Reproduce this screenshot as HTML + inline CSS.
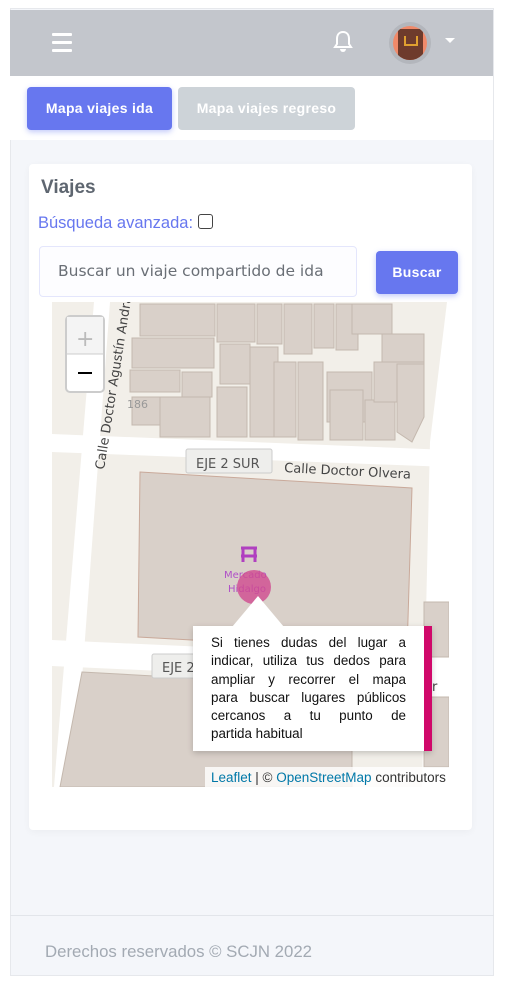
<!DOCTYPE html>
<html><head><meta charset="utf-8"><style>
*{box-sizing:border-box;margin:0;padding:0}
body{width:505px;height:985px;background:#fff;font-family:"Liberation Sans",sans-serif;position:relative;overflow:hidden}
.frame{position:absolute;left:10px;top:8px;width:484px;height:968px;background:#f4f6fa;border:1px solid #e6e8ec}
.nav{position:absolute;left:10px;top:10px;width:483px;height:66px;background:#c3c6cc}
.band{position:absolute;left:10px;top:76px;width:483px;height:64px;background:#fff}
.btn{position:absolute;border-radius:4px;color:#fff;font-weight:bold;font-size:14px;text-align:center;line-height:43px;letter-spacing:.3px}
.card{position:absolute;left:29px;top:164px;width:443px;height:666px;background:#fff;border-radius:4px;box-shadow:0 2px 8px rgba(0,0,0,.04)}
.tt div{text-align:justify;text-align-last:justify;white-space:nowrap;height:18.3px}
</style></head><body>
<div class="frame"></div>
<div class="nav">
 <div style="position:absolute;left:42px;top:23px;width:20px;height:3px;background:#fff;border-radius:1px"></div>
 <div style="position:absolute;left:42px;top:31px;width:20px;height:3px;background:#fff;border-radius:1px"></div>
 <div style="position:absolute;left:42px;top:39px;width:20px;height:3px;background:#fff;border-radius:1px"></div>
 <svg style="position:absolute;left:322px;top:20px" width="22" height="24" viewBox="0 0 22 24"><path d="M11 2c-4 0-6 3-6 7v5l-2 3h16l-2-3V9c0-4-2-7-6-7z" fill="none" stroke="#fff" stroke-width="2"/><path d="M8 19a3 3 0 0 0 6 0" fill="#fff"/></svg>
 <div style="position:absolute;left:379px;top:12px;width:42px;height:42px;border-radius:50%;background:#b3b6bc"></div>
 <div style="position:absolute;left:383px;top:16px;width:34px;height:34px;border-radius:50%;background:#f08a6a;overflow:hidden"><div style="position:absolute;left:5px;top:3px;width:25px;height:31px;background:#6e3b2c"></div><div style="position:absolute;left:11px;top:10px;width:14px;height:10px;border:2px solid #e0a030;border-top:none"></div></div>
 <div style="position:absolute;left:435px;top:28px;border-left:5px solid transparent;border-right:5px solid transparent;border-top:5px solid #fff"></div>
</div>
<div class="band"></div>
<div class="btn" style="left:27px;top:87px;width:145px;background:#6777ef;box-shadow:0 2px 6px rgba(103,119,239,.4)">Mapa viajes ida</div>
<div class="btn" style="left:178px;top:87px;width:177px;background:#cdd3d8">Mapa viajes regreso</div>
<div class="card">
 <div style="position:absolute;left:12px;top:13px;font-size:19px;font-weight:bold;color:#5e6670">Viajes</div>
 <div style="position:absolute;left:9px;top:50px;font-size:16.5px;color:#6777ef">Búsqueda avanzada:</div>
 <div style="position:absolute;left:169px;top:50px;width:15px;height:15px;border:1.5px solid #444;border-radius:3px"></div>
 <div style="position:absolute;left:10px;top:82px;width:318px;height:51px;border:1px solid #e4e6fc;border-radius:4px;background:#fdfdff;font-family:'DejaVu Sans',sans-serif;font-size:15.5px;color:#6a6f76;padding-left:18px;line-height:49px;white-space:nowrap">Buscar un viaje compartido de ida</div>
 <div class="btn" style="left:347px;top:87px;width:82px;background:#6777ef;box-shadow:0 2px 6px rgba(103,119,239,.4);font-size:14px">Buscar</div>
</div>
<svg style="position:absolute;left:52px;top:302px" width="397" height="485" viewBox="0 0 397 485">
 <rect width="397" height="485" fill="#f2efe9"/>
 <g fill="#d9d0c9" stroke="#c4b8ae" stroke-width="1">
  <rect x="88" y="2" width="75" height="32"/><rect x="80" y="36" width="82" height="30"/><rect x="78" y="68" width="50" height="22"/><rect x="130" y="70" width="30" height="25"/>
  <rect x="165" y="2" width="38" height="38"/><rect x="168" y="42" width="30" height="40"/><rect x="205" y="2" width="25" height="40"/><rect x="232" y="2" width="28" height="50"/>
  <rect x="262" y="2" width="20" height="44"/><rect x="284" y="2" width="22" height="46"/><rect x="300" y="2" width="40" height="30"/><rect x="330" y="32" width="42" height="30"/>
  <rect x="165" y="85" width="30" height="50"/><rect x="198" y="45" width="28" height="90"/><rect x="222" y="60" width="22" height="75"/><rect x="246" y="60" width="25" height="78"/>
  <rect x="275" y="70" width="45" height="50"/><rect x="278" y="88" width="33" height="50"/><rect x="313" y="98" width="30" height="40"/><rect x="322" y="60" width="50" height="40"/>
  <rect x="80" y="95" width="28" height="28"/><rect x="108" y="95" width="50" height="40"/>
 </g>
 <polygon points="345,62 372,62 372,115 360,140 345,130" fill="#d9d0c9" stroke="#c4b8ae"/>
 <polygon points="0,132 397,148 397,165 0,150" fill="#fff"/>
 <polygon points="395,0 397,0 397,485 370,485 378,140" fill="#fff"/>
 <polygon points="42,0 58,0 22,485 2,485" fill="#fff"/>
 <polygon points="0,338 397,356 397,382 0,364" fill="#fff"/>
 <polygon points="88,170 360,186 355,350 86,335" fill="#d9d0c9" stroke="#c9a99a"/>
 <polygon points="30,370 300,385 300,485 8,485" fill="#d9d0c9" stroke="#c4b8ae"/>
 <rect x="372" y="300" width="25" height="55" fill="#d9d0c9" stroke="#c4b8ae"/>
 <rect x="372" y="395" width="25" height="70" fill="#d9d0c9" stroke="#c4b8ae"/>
 <rect x="134" y="147" width="86" height="24" rx="2" fill="#eeeeec" stroke="#ccc"/>
 <text x="144" y="166" font-family="DejaVu Sans" font-size="13" fill="#555">EJE 2 SUR</text>
 <text x="232" y="170" font-family="DejaVu Sans" font-size="13" fill="#444" transform="rotate(3 232 170)">Calle Doctor Olvera</text>
 <text x="52" y="168" font-family="DejaVu Sans" font-size="13" fill="#444" transform="rotate(-81 52 168)">Calle Doctor Agustín Andra</text>
 <text x="75" y="106" font-family="DejaVu Sans" font-size="11" fill="#999">186</text>
 <rect x="100" y="352" width="45" height="24" rx="2" fill="#eeeeec" stroke="#ccc"/>
 <text x="110" y="370" font-family="DejaVu Sans" font-size="13" fill="#555">EJE 2</text>
 <text x="372" y="389" font-family="DejaVu Sans" font-size="13" fill="#444">or</text>
 <path d="M189 246h16M191 246v14M203 246v14M189 254h16" stroke="#b040c0" stroke-width="3" fill="none"/>
 <text x="172" y="276" font-family="DejaVu Sans" font-size="10" fill="#b050c8">Mercado</text>
 <text x="176" y="290" font-family="DejaVu Sans" font-size="10" fill="#b050c8">Hidalgo</text>
 <circle cx="202" cy="285" r="17" fill="#d04a90" opacity=".8"/>
 <rect x="14" y="14" width="38" height="76" rx="4" fill="#fff" stroke="#ccc" stroke-width="2"/>
 <rect x="15" y="15" width="36" height="37" fill="#f4f4f4"/>
 <line x1="15" y1="52" x2="51" y2="52" stroke="#ccc"/>
 <text x="24" y="44" font-family="DejaVu Sans" font-size="22" fill="#bbb">+</text>
 <rect x="26" y="70" width="14" height="2" fill="#000"/>
 <rect x="153" y="465" width="244" height="20" fill="rgba(255,255,255,.8)"/>
 <text x="159" y="480" font-family="Liberation Sans" font-size="13.5"><tspan fill="#0078a8">Leaflet</tspan><tspan fill="#333"> | © </tspan><tspan fill="#0078a8">OpenStreetMap</tspan><tspan fill="#333"> contributors</tspan></text>
</svg>
<div style="position:absolute;left:193px;top:626px;width:239px;height:125px;background:#fff;box-shadow:0 2px 6px rgba(0,0,0,.2)"></div>
<div style="position:absolute;left:232px;top:596px;border-left:26px solid transparent;border-right:26px solid transparent;border-bottom:31px solid #fff"></div>
<div style="position:absolute;left:424px;top:626px;width:8px;height:125px;background:#d0086a"></div>
<div class="tt" style="position:absolute;left:211px;top:634px;width:195px;font-size:13.4px;line-height:18.3px;color:#111">
<div>Si tienes dudas del lugar a</div>
<div>indicar, utiliza tus dedos para</div>
<div>ampliar y recorrer el mapa</div>
<div>para buscar lugares públicos</div>
<div>cercanos a tu punto de</div>
<div style="text-align-last:left">partida habitual</div>
</div>
<div style="position:absolute;left:10px;top:915px;width:484px;height:1px;background:#e2e5ea"></div>
<div style="position:absolute;left:45px;top:942px;font-size:16.8px;color:#a3aab3">Derechos reservados © SCJN 2022</div>
</body></html>
